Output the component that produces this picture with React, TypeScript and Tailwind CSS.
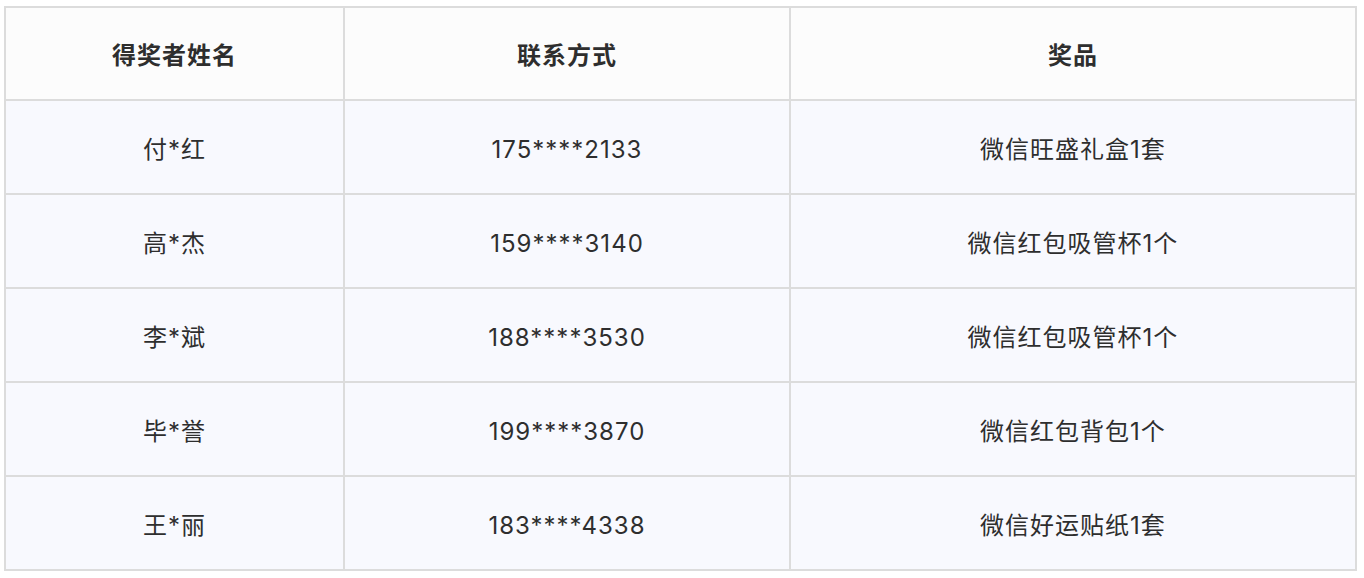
import React from "react";

interface Winner {
  name: string;
  phone: string;
  prize: string;
}

const winners: Winner[] = [
  { name: "付*红", phone: "175****2133", prize: "微信旺盛礼盒1套" },
  { name: "高*杰", phone: "159****3140", prize: "微信红包吸管杯1个" },
  { name: "李*斌", phone: "188****3530", prize: "微信红包吸管杯1个" },
  { name: "毕*誉", phone: "199****3870", prize: "微信红包背包1个" },
  { name: "王*丽", phone: "183****4338", prize: "微信好运贴纸1套" },
];

const font = {
  fontFamily: 'Inter, "Noto Sans CJK SC", sans-serif',
};

const App: React.FC = () => {
  return (
    <div className="pl-[4px] pt-[6px] bg-white min-h-screen" style={font}>
      <div className="w-[1353px] border-2 border-[#dcdcdc] text-[#2e2e2e] text-[24px] tracking-[1px]">
        {/* header */}
        <div className="grid grid-cols-[337px_444px_564px] gap-x-[2px] bg-[#dcdcdc] h-[91px]">
          <div className="bg-[#fcfcfc] flex items-center justify-center font-bold pt-[5px]">
            得奖者姓名
          </div>
          <div className="bg-[#fcfcfc] flex items-center justify-center font-bold pt-[5px]">
            联系方式
          </div>
          <div className="bg-[#fcfcfc] flex items-center justify-center font-bold pt-[5px]">
            奖品
          </div>
        </div>

        {winners.map((w) => (
          <div
            key={w.phone}
            className="grid grid-cols-[337px_444px_564px] gap-x-[2px] bg-[#dcdcdc] border-t-2 border-[#dcdcdc] h-[94px]"
          >
            <div className="bg-[#f8f9fe] flex items-center justify-center pt-[5px]">
              {w.name}
            </div>
            <div className="bg-[#f8f9fe] flex items-center justify-center pt-[5px]">
              {w.phone}
            </div>
            <div className="bg-[#f8f9fe] flex items-center justify-center pt-[5px]">
              {w.prize}
            </div>
          </div>
        ))}
      </div>
    </div>
  );
};

export default App;
